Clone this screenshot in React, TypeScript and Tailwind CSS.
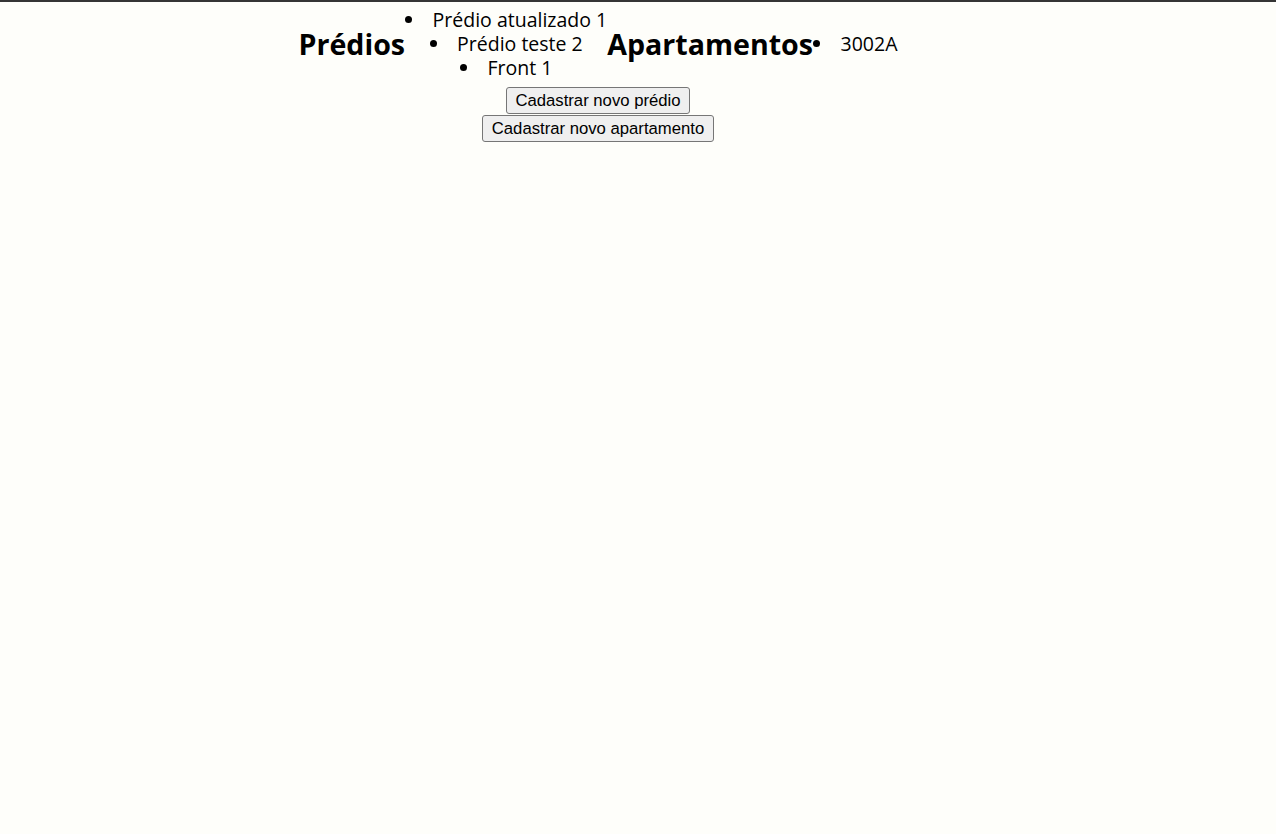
import React from "react";

export default function App() {
  return (
    <div className="min-h-[834px] bg-[#fefefa] border-t-2 border-[#353535] text-black">
      <div className="pr-[80px] flex flex-col items-center">
        <div className="mt-[6px] flex items-center">
          <h2 className="text-[28.6px] font-bold leading-[34px] font-['Open_Sans',sans-serif]">Prédios</h2>
          <ul className="list-disc list-inside text-center text-[19.5px] leading-[24px] font-['Open_Sans',sans-serif]">
            <li>Prédio atualizado 1</li>
            <li>Prédio teste 2</li>
            <li>Front 1</li>
          </ul>
          <h2 className="text-[28.6px] font-bold leading-[34px] font-['Open_Sans',sans-serif]">Apartamentos</h2>
          <ul className="list-disc list-inside text-center text-[19.5px] leading-[24px] font-['Open_Sans',sans-serif]">
            <li>3002A</li>
          </ul>
        </div>
        <div className="mt-[7px] flex flex-col items-center gap-[1px] font-['Liberation_Sans',Arial,sans-serif] text-[16.7px]">
          <button className="h-[27px] px-[8.5px] border border-[#767676] rounded-[3px] bg-[#efefef] leading-[19px]">
            Cadastrar novo prédio
          </button>
          <button className="h-[27px] px-[8.5px] border border-[#767676] rounded-[3px] bg-[#efefef] leading-[19px]">
            Cadastrar novo apartamento
          </button>
        </div>
      </div>
    </div>
  );
}
